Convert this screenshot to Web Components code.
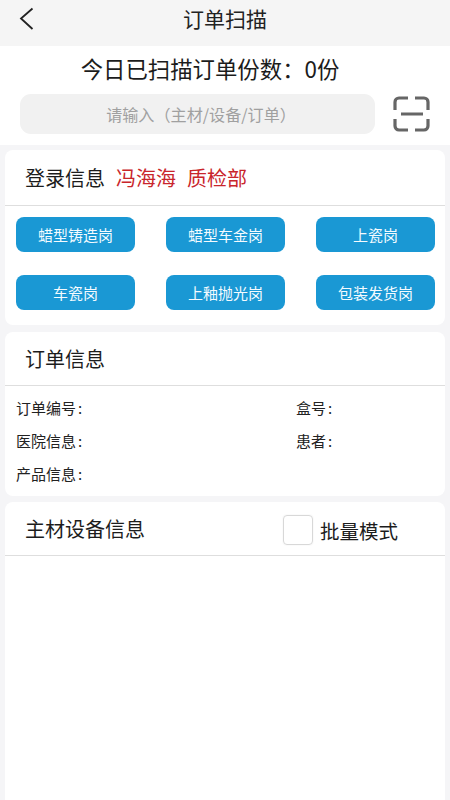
<!DOCTYPE html>
<html lang="zh-CN"><head><meta charset="utf-8"><style>
html,body{margin:0;padding:0}
body{width:450px;height:800px;overflow:hidden;background:#f5f5f7;font-family:"Noto Sans CJK SC","Noto Sans",sans-serif;color:#1c1c1c}
</style></head><body>
<scan-page></scan-page>
<template id="t-nav"><style>
:host{display:flex;height:46px;background:#f5f5f5;align-items:center;justify-content:center;position:relative;box-sizing:border-box;padding-bottom:10px}
svg{position:absolute;left:19px;top:7px}
span{font-size:21px;line-height:30px;color:#222}
</style><svg width="16" height="24" viewBox="0 0 16 24" fill="none" stroke="#222" stroke-width="1.8"><path d="M13.5 1.5 2 11.5 13.5 22"/></svg><span><slot></slot></span></template>
<template id="t-scan"><style>
:host{display:block;background:#fff;height:99px}
.count{height:48px;display:flex;align-items:center;justify-content:center;font-size:22.4px;color:#1c1c1c;box-sizing:border-box;padding:0 30px 4px 0}
.row{display:flex;align-items:center;height:40px;padding-left:20px}
.input{width:355px;height:40px;border-radius:11px;background:#f1f1f1;color:#a0a0a0;font-size:16.1px;display:flex;align-items:center;justify-content:center;box-sizing:border-box;padding-left:7px}
svg{margin-left:18px}
</style><div class="count"><slot name="count"></slot></div><div class="row"><div class="input"><slot name="hint"></slot></div>
<svg width="37" height="36" viewBox="0 0 37 36" fill="none" stroke="#666" stroke-width="3.2"><path d="M2 14V6a4 4 0 0 1 4-4h9M22 2h9a4 4 0 0 1 4 4v8M2 23v7a4 4 0 0 0 4 4h9M22 34h9a4 4 0 0 0 4-4v-7M8 18h22"/></svg></div></template>
<template id="t-card"><style>
:host{display:block;background:#fff;margin:0 5px;border-radius:8px;overflow:hidden}
.head{display:flex;align-items:center;box-sizing:border-box;height:var(--head-h,55px);padding-left:20px;border-bottom:1.5px solid #dedede;font-size:20px;color:#1c1c1c;padding-bottom:1px}
.grow{flex:1}
</style><div class="head"><slot name="title"></slot><span class="grow"></span><slot name="extra"></slot></div><slot></slot></template>
<template id="t-posts"><style>
:host{display:grid;grid-template-columns:119px 119px 119px;column-gap:31px;row-gap:23px;padding:11px 10px 15px 11px}
</style><slot></slot></template>
<template id="t-post"><style>
:host{display:flex;height:35px;border-radius:8px;background:#1a98d4;color:#f4fbff;font-size:15px;align-items:center;justify-content:center}
</style><slot></slot></template>
<template id="t-info"><style>
:host{display:grid;grid-template-columns:280px 1fr;grid-auto-rows:33px;padding:5px 0 6px 11px;font-size:15px;color:#222;align-items:center}
</style><slot></slot></template>
<template id="t-batch"><style>
:host{display:flex;align-items:center;margin-right:47px;font-size:19.5px;color:#1c1c1c;padding-top:4px}
i{display:block;width:28px;height:28px;border:1px solid #d8d8d8;border-radius:4px;margin-right:7px;margin-top:-1px;box-shadow:0 0 2px #eee}
</style><i></i><slot></slot></template>
<template id="t-page"><style>
:host{display:block}
.stack{display:flex;flex-direction:column}
.c1{margin-top:5px;--head-h:56px}.c2{margin-top:7px;--head-h:54px}.c3{margin-top:6px;height:298px;--head-h:54px;border-radius:8px 8px 0 0}
.name{color:#c9252b;margin-left:11px}.dept{color:#c9252b;margin-left:11px}
u{text-decoration:none;margin-left:2px}
</style><div class="stack">
<nav-bar>订单扫描</nav-bar>
<scan-panel><span slot="count">今日已扫描订单份数：0份</span><span slot="hint">请输入（主材/设备/订单）</span></scan-panel>
<info-card class="c1"><span slot="title">登录信息<span class="name">冯海海</span><span class="dept">质检部</span></span>
<post-grid><post-button>蜡型铸造岗</post-button><post-button>蜡型车金岗</post-button><post-button>上瓷岗</post-button><post-button>车瓷岗</post-button><post-button>上釉抛光岗</post-button><post-button>包装发货岗</post-button></post-grid></info-card>
<info-card class="c2"><span slot="title">订单信息</span>
<order-info><span>订单编号<u>:</u></span><span>盒号<u>:</u></span><span>医院信息<u>:</u></span><span>患者<u>:</u></span><span>产品信息<u>:</u></span></order-info></info-card>
<info-card class="c3"><span slot="title">主材设备信息</span><batch-check slot="extra">批量模式</batch-check></info-card>
</div></template>
<script>
const def=(n,t)=>customElements.define(n,class extends HTMLElement{constructor(){super();this.attachShadow({mode:"open"}).append(document.getElementById(t).content.cloneNode(true))}});
def("nav-bar","t-nav");def("scan-panel","t-scan");def("info-card","t-card");def("post-grid","t-posts");def("post-button","t-post");def("order-info","t-info");def("batch-check","t-batch");def("scan-page","t-page");
</script>
</body></html>
